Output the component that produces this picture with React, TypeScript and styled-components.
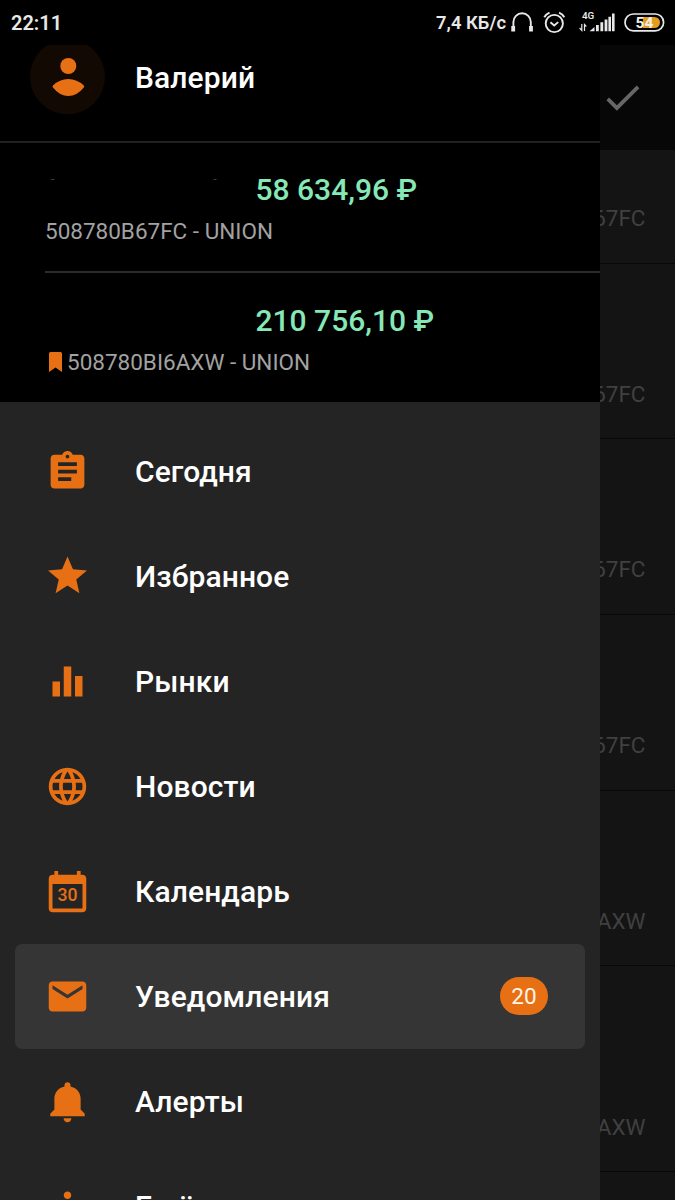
import React from "react";
import styled, { createGlobalStyle } from "styled-components";

const ORANGE = "#e87014";

const GlobalStyle = createGlobalStyle`
  * { box-sizing: border-box; }
  html, body { margin: 0; padding: 0; background: #000; }
  body { font-family: Roboto, "Liberation Sans", sans-serif; overflow: hidden; }
`;

const Screen = styled.div`
  width: 675px;
  height: 1200px;
  display: flex;
  flex-direction: column;
  overflow: hidden;
  background: #000;
`;

const StatusBar = styled.header`
  flex: none;
  height: 45px;
  display: flex;
  align-items: center;
  justify-content: space-between;
  padding: 0 10px 0 11px;
  color: #e8e8e8;
`;

const Clock = styled.span`
  font-size: 20px;
  font-weight: 600;
  line-height: 45px;
  padding-top: 1px;
`;

const StatusRight = styled.div`
  display: flex;
  align-items: center;
`;

const Speed = styled.span`
  margin-right: -1px;
  padding-top: 1px;
  font-size: 18.4px;
  font-weight: 600;
  line-height: 44px;
`;

const StatusIcons = styled.svg`
  display: block;
  width: 160px;
  height: 45px;
`;

const Content = styled.div`
  flex: 1;
  min-height: 0;
  display: flex;
`;

const Drawer = styled.aside`
  flex: none;
  width: 600px;
  display: flex;
  flex-direction: column;
  background: #242424;
  overflow: hidden;
`;

const Profile = styled.div`
  flex: none;
  height: 98px;
  display: flex;
  align-items: flex-start;
  padding-left: 30px;
  background: #000;
  border-bottom: 2px solid #202020;
`;

const AvatarImage = styled.svg`
  flex: none;
  display: block;
  width: 75px;
  height: 70px;
  margin-right: 30px;
`;

const Name = styled.span`
  font-size: 30px;
  font-weight: 500;
  line-height: 36px;
  letter-spacing: 0.1px;
  margin-top: 15px;
  color: #fff;
`;

const Accounts = styled.section`
  flex: none;
  height: 259px;
  background: #000;
  padding-left: 45px;
`;

const Account = styled.div<{ $divider?: boolean }>`
  height: ${(p) => (p.$divider ? 130 : 129)}px;
  padding-top: ${(p) => (p.$divider ? 28 : 29)}px;
  border-bottom: ${(p) => (p.$divider ? "2px solid #2b2b2b" : "none")};
`;

const BalanceRow = styled.div`
  display: flex;
  align-items: center;
  height: 38px;
`;

const AccountName = styled.svg`
  flex: none;
  display: block;
  width: 210.5px;
  height: 38px;
`;

const Balance = styled.span`
  font-size: 30px;
  font-weight: 500;
  line-height: 38px;
  color: #86e8b6;
`;

const AccountCode = styled.div`
  display: flex;
  align-items: center;
  margin-top: 8px;
  font-size: 22.5px;
  line-height: 28px;
  color: #a2a2a2;
`;

const Bookmark = styled.svg`
  display: block;
  width: 13px;
  height: 20px;
  margin: 0 5px 0 4px;
`;

const Menu = styled.nav`
  flex: none;
  display: flex;
  flex-direction: column;
  padding: 17px 15px 0;
`;

const MenuItem = styled.div<{ $active?: boolean }>`
  height: 105px;
  display: flex;
  align-items: center;
  padding: 0 37px 0 30px;
  border-radius: 7px;
  background: ${(p) => (p.$active ? "#353535" : "transparent")};
`;

const MenuIcon = styled.svg`
  flex: none;
  display: block;
  width: 45px;
  height: 45px;
  fill: ${ORANGE};
`;

const IconNumber = styled.text`
  font-size: 9.400px;
  font-weight: 500;
  text-anchor: middle;
`;

const MenuLabel = styled.span`
  flex: 1;
  margin-left: 45px;
  font-size: 30px;
  font-weight: 500;
  line-height: 36px;
  letter-spacing: 0.1px;
  color: #fff;
`;

const Badge = styled.span`
  width: 48px;
  height: 38px;
  margin-bottom: 2px;
  border-radius: 19px;
  display: flex;
  align-items: center;
  justify-content: center;
  background: ${ORANGE};
  color: #fff6e8;
  font-size: 22.5px;
  line-height: 38px;
`;

const Backdrop = styled.main`
  flex: 1;
  min-width: 0;
  display: flex;
  flex-direction: column;
  background: #141414;
  overflow: hidden;
`;

const Toolbar = styled.div`
  flex: none;
  height: 105px;
  display: flex;
  align-items: center;
  background: #070707;
`;

const CheckIcon = styled.svg`
  display: block;
  width: 45px;
  height: 45px;
`;

const ListRow = styled.div<{ $height: number; $bottom: number }>`
  flex: none;
  height: ${(p) => p.$height}px;
  display: flex;
  align-items: flex-end;
  justify-content: flex-end;
  padding: 0 29.5px ${(p) => p.$bottom}px 0;
  border-bottom: 1px solid #080808;
  font-size: 22.5px;
  line-height: 28px;
  color: #404040;
  white-space: nowrap;
`;

type Glyph = { d: string; number?: string };

const GLYPHS: Record<string, Glyph> = {
  today: {
    d: "M19 3h-4.18C14.4 1.84 13.3 1 12 1c-1.3 0-2.4.84-2.82 2H5c-1.1 0-2 .9-2 2v14c0 1.1.9 2 2 2h14c1.1 0 2-.9 2-2V5c0-1.1-.9-2-2-2zm-7 0c.55 0 1 .45 1 1s-.45 1-1 1-1-.45-1-1 .45-1 1-1zm2 14H7v-2h7v2zm3-4H7v-2h10v2zm0-4H7V7h10v2z",
  },
  favorites: {
    d: "M12 16.850L18.350 20.900l-1.670-7.270L22.400 8.800l-7.500-.63L12 1.350 9.100 8.170 1.600 8.800l5.720 4.830L5.650 20.900z",
  },
  markets: { d: "M10 20h4V4h-4v16zm-6 0h4v-8H4v8zM16 9v11h4V9h-4z" },
  news: {
    d: "M11.99 2C6.47 2 2 6.48 2 12s4.47 10 9.99 10C17.52 22 22 17.52 22 12S17.52 2 11.99 2zm6.93 6h-2.95c-.32-1.25-.78-2.45-1.38-3.56 1.84.63 3.37 1.91 4.33 3.56zM12 4.04c.83 1.2 1.48 2.53 1.91 3.96h-3.82c.43-1.43 1.08-2.76 1.91-3.96zM4.26 14C4.1 13.36 4 12.69 4 12s.1-1.36.26-2h3.38c-.08.66-.14 1.32-.14 2 0 .68.06 1.34.14 2H4.26zm.82 2h2.95c.32 1.25.78 2.45 1.38 3.56-1.84-.63-3.37-1.9-4.33-3.56zm2.95-8H5.08c.96-1.66 2.49-2.93 4.33-3.56C8.81 5.55 8.35 6.75 8.03 8zM12 19.96c-.83-1.2-1.48-2.53-1.91-3.96h3.82c-.43 1.43-1.08 2.76-1.91 3.96zM14.34 14H9.66c-.09-.66-.16-1.32-.16-2 0-.68.07-1.35.16-2h4.68c.09.65.16 1.32.16 2 0 .68-.07 1.34-.16 2zm.25 5.56c.6-1.11 1.06-2.31 1.38-3.56h2.95c-.96 1.65-2.49 2.93-4.33 3.56zM16.36 14c.08-.66.14-1.32.14-2 0-.68-.06-1.34-.14-2h3.38c.16.64.26 1.31.26 2s-.1 1.36-.26 2h-3.38z",
  },
  calendar: {
    d: "M20 3h-1V1h-2v2H7V1H5v2H4c-1.1 0-2 .9-2 2v16c0 1.1.9 2 2 2h16c1.1 0 2-.9 2-2V5c0-1.1-.9-2-2-2zm0 18H4V8h16v13z",
    number: "30",
  },
  notifications: {
    d: "M20 4H4c-1.1 0-1.99.9-1.99 2L2 18c0 1.1.9 2 2 2h16c1.1 0 2-.9 2-2V6c0-1.1-.9-2-2-2zm0 4l-8 5-8-5V6l8 5 8-5v2z",
  },
  alerts: {
    d: "M12 1.700c-.9 0-1.6.65-1.6 1.5v.8C7.2 4.700 5 7.300 5 10.600v5.700l-2.200 2.200v1.300h18.400v-1.300L19 16.300v-5.700c0-3.300-2.200-5.900-5.400-6.600v-.8C13.600 2.350 12.900 1.700 12 1.700zM9.900 20.900c.15 1.300 1 2.200 2.100 2.200s1.950-.9 2.100-2.200z",
  },
  more: {
    d: "M12 8c1.100 0 2-.9 2-2s-.9-2-2-2-2 .9-2 2 .9 2 2 2zm0 2c-1.100 0-2 .9-2 2s.9 2 2 2 2-.9 2-2-.9-2-2-2zm0 6c-1.100 0-2 .9-2 2s.9 2 2 2 2-.9 2-2-.9-2-2-2z",
  },
};

const MENU = [
  { icon: "today", label: "Сегодня" },
  { icon: "favorites", label: "Избранное" },
  { icon: "markets", label: "Рынки" },
  { icon: "news", label: "Новости" },
  { icon: "calendar", label: "Календарь" },
  { icon: "notifications", label: "Уведомления", badge: "20", active: true },
  { icon: "alerts", label: "Алерты" },
  { icon: "more", label: "Ещё" },
];

const ROWS = [
  { text: "67FC", height: 114, bottom: 31 },
  { text: "67FC", height: 175, bottom: 30 },
  { text: "67FC", height: 176, bottom: 31 },
  { text: "67FC", height: 176, bottom: 31 },
  { text: "AXW", height: 175, bottom: 30 },
  { text: "AXW", height: 206, bottom: 30 },
];

function StatusGlyphs() {
  return (
    <StatusIcons viewBox="505 0 160 45" fill="none" stroke="#e8e8e8">
      <path d="M513.400 28V22a8.700 8.700 0 0 1 17.400 0V28" strokeWidth="1.900" />
      <path d="M513.200 26v5.600M531 26v5.600" strokeWidth="3.800" />
      <circle cx="554.300" cy="23.500" r="8.600" strokeWidth="1.900" />
      <path d="M544.300 17.300q1.600-3 5.200-4.600M564.300 17.300q-1.600-3-5.200-4.600" strokeWidth="1.900" />
      <path d="M550.400 22.300l3.800 3.200 4-3.400" strokeWidth="1.900" />
      <path d="M581.800 24v6.500l-2.200-2.500M584.500 31v-6.500l1.800 2" strokeWidth="1.200" />
      <path
        d="M589.500 31.300l5-4.300v4.300zM596 25h2.800v6.300H596zM600.400 22.200h2.800v9.100h-2.800zM604.600 19.500h2.800v11.800h-2.800zM608.400 16.700h2.600v14.600h-2.600zM612 13.500h2.600v17.800H612z"
        fill="#e8e8e8"
        stroke="none"
      />
      <text x="582" y="19.300" fontSize="9.800" fontWeight="600" fill="#e8e8e8" stroke="none">4G</text>
      <path d="M643 17h11.500a5.500 5.500 0 0 1 0 11H643z" fill="#e39b20" stroke="none" />
      <rect x="625" y="14" width="38.600" height="16.800" rx="8.400" strokeWidth="1.700" />
      <text x="644.500" y="27.900" fontSize="15.500" fontWeight="700" textAnchor="middle" fill="#f4f0e8" stroke="none">54</text>
    </StatusIcons>
  );
}

export default function App() {
  return (
    <>
      <GlobalStyle />
      <Screen>
        <StatusBar>
          <Clock>22:11</Clock>
          <StatusRight>
            <Speed>7,4 КБ/с</Speed>
            <StatusGlyphs />
          </StatusRight>
        </StatusBar>
        <Content>
          <Drawer>
            <Profile>
              <AvatarImage viewBox="0 0 75 70">
                <circle cx="37.500" cy="31.800" r="37.500" fill="#120903" />
                <g fill={ORANGE}>
                  <circle cx="38.300" cy="21" r="8" />
                  <path d="M23 40.500Q29.500 34 38.300 34T53.800 40.500Q54.800 41.500 53.800 42.500Q47 51 38.300 51T23 42.500Q22 41.500 23 40.500z" />
                </g>
              </AvatarImage>
              <Name>Валерий</Name>
            </Profile>
            <Accounts>
              <Account $divider>
                <BalanceRow>
                  <AccountName viewBox="0 0 210.5 38">
                    <path d="M6 8.500h3.500M168.500 8.500h3" stroke="#3c3c3c" strokeWidth="1" />
                  </AccountName>
                  <Balance>58 634,96 ₽</Balance>
                </BalanceRow>
                <AccountCode>508780B67FC - UNION</AccountCode>
              </Account>
              <Account>
                <BalanceRow>
                  <AccountName viewBox="0 0 210.5 38" />
                  <Balance>210 756,10 ₽</Balance>
                </BalanceRow>
                <AccountCode>
                  <Bookmark viewBox="0 0 13 20">
                    <path d="M1.500 0h10A1.500 1.500 0 0 1 13 1.500V20L6.500 15.500 0 20V1.500A1.500 1.500 0 0 1 1.500 0z" fill={ORANGE} />
                  </Bookmark>
                  508780BI6AXW - UNION
                </AccountCode>
              </Account>
            </Accounts>
            <Menu>
              {MENU.map((item) => (
                <MenuItem key={item.label} $active={item.active}>
                  <MenuIcon viewBox="0 0 24 24">
                    <path d={GLYPHS[item.icon].d} />
                    {GLYPHS[item.icon].number && (
                      <IconNumber x="12" y="17.300">{GLYPHS[item.icon].number}</IconNumber>
                    )}
                  </MenuIcon>
                  <MenuLabel>{item.label}</MenuLabel>
                  {item.badge && <Badge>{item.badge}</Badge>}
                </MenuItem>
              ))}
            </Menu>
          </Drawer>
          <Backdrop>
            <Toolbar>
              <CheckIcon viewBox="0 0 24 24">
                <path d="M9 16.170L4.830 12l-1.420 1.410L9 19 21 7l-1.410-1.410z" fill="#666" />
              </CheckIcon>
            </Toolbar>
            {ROWS.map((row, i) => (
              <ListRow key={i} $height={row.height} $bottom={row.bottom}>{row.text}</ListRow>
            ))}
          </Backdrop>
        </Content>
      </Screen>
    </>
  );
}
